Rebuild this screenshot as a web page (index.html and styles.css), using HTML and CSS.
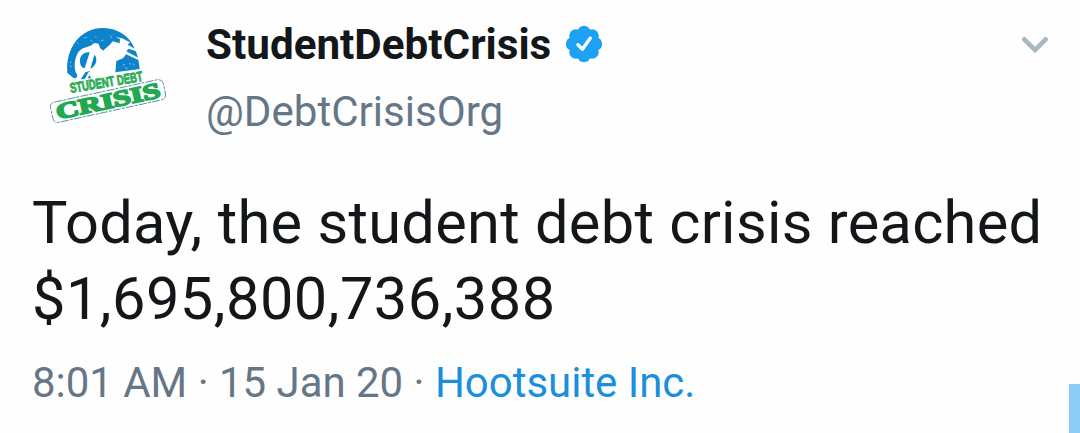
FILE: index.html
```html
<!DOCTYPE html>
<html lang="en">
<head>
<meta charset="utf-8">
<title>StudentDebtCrisis</title>
<link rel="stylesheet" href="styles.css">
</head>
<body>
<article class="tweet">
  <header class="header">
    <svg class="avatar" viewBox="0 0 420 360" role="img" aria-label="Student Debt Crisis">
      <path class="dome" d="M82 174C76 95 125 39 188 39C250 39 293 82 299 162L226 172L102 190Z"/>
      <path class="figure" d="M104 205L112 181C99 164 103 126 117 109C128 96 145 97 155 90L163 84L176 86L180 99L190 107C204 94 212 88 218 79L239 85L240 72L226 66L246 70L270 82L263 89L296 107L297 112L266 101L259 109L297 130L294 134L258 118L249 130L229 138L226 174L190 182L150 195Z"/>
      <path class="dome" d="M149 112C128 111 118 125 120 142C121 152 126 159 134 160ZM163 119C174 130 170 153 151 161ZM122 193L136 172L150 168L147 180L154 189Z"/>
      <path class="figure" d="M132 197L146 170L151 172L143 192Z"/>
      <path class="grain" d="M111 83l4 3M132 69l9-2M164 64l6 3M182 78l9-3M211 61l4 8M248 151l7-3M267 144l6 5M95 139l-5 5M91 151l3 6M279 145l4 7M151 77l7 2M254 157l9 4"/>
      <g transform="translate(204 257) rotate(-12.3)">
        <rect class="frame" x="-173" y="-30" width="346" height="62" rx="15"/>
        <text class="word-bottom" x="-159" y="23" textLength="318" lengthAdjust="spacingAndGlyphs">CRISIS</text>
      </g>
      <g transform="translate(92 234) rotate(-9.5)">
        <text class="word-top" textLength="221" lengthAdjust="spacingAndGlyphs">STUDENT DEBT</text>
      </g>
    </svg>
    <div class="identity">
      <div class="name-row">
        <span class="name">StudentDebtCrisis</span>
        <svg class="badge" viewBox="0 0 38 38" role="img" aria-label="Verified">
          <g class="badge-shape">
            <circle cx="19" cy="19" r="14"/>
            <circle cx="19" cy="7.5" r="6.7"/><circle cx="27.1" cy="10.9" r="6.7"/>
            <circle cx="30.5" cy="19" r="6.7"/><circle cx="27.1" cy="27.1" r="6.7"/>
            <circle cx="19" cy="30.5" r="6.7"/><circle cx="10.9" cy="27.1" r="6.7"/>
            <circle cx="7.5" cy="19" r="6.7"/><circle cx="10.9" cy="10.9" r="6.7"/>
          </g>
          <path class="badge-check" d="M13 19.8L17.4 24.3L25.2 13.2"/>
        </svg>
      </div>
      <div class="handle">@DebtCrisisOrg</div>
    </div>
    <svg class="chevron" viewBox="0 0 28 18" aria-hidden="true"><path d="M3.3 3.3L14 14L24.7 3.3"/></svg>
  </header>
  <p class="message">Today, the student debt crisis reached<br><span class="amount">$1,695,800,736,388</span></p>
  <footer class="meta">8:01 AM · 15 Jan 20 · <a class="source">Hootsuite Inc.</a></footer>
  <div class="side-tab"></div>
</article>
</body>
</html>
```

FILE: styles.css
```css
body {
  margin: 0;
  background: #fefefe;
  font-family: Roboto, "Liberation Sans", sans-serif;
}

.tweet {
  position: relative;
  box-sizing: border-box;
  height: 433px;
  padding: 15px 0 0 32px;
  overflow: hidden;
  color: #14171a;
}

.header {
  display: flex;
  align-items: flex-start;
  height: 170px;
}

.avatar {
  flex: none;
  width: 140px;
  height: 120px;
  margin-left: 8px;
}

.dome { fill: #0c83ca; }
.figure { fill: #fefefe; }
.grain { fill: none; stroke: #79bce4; stroke-width: 3; }

.word-top {
  fill: #29ad54;
  stroke: #29ad54;
  stroke-width: 2.5;
  font: bold 42px "Liberation Sans", sans-serif;
}

.word-bottom {
  fill: #20a951;
  stroke: #20a951;
  stroke-width: 5;
  font: bold 66px "Liberation Serif", serif;
}

.frame {
  fill: #fefefe;
  stroke: #4686a0;
  stroke-width: 2.5;
  stroke-dasharray: 24 3 9 4;
}

.identity {
  flex: 1;
  margin: 1px 0 0 26px;
}

.name-row {
  display: flex;
  align-items: center;
  height: 58px;
}

.name {
  font-size: 42.2px;
  font-weight: 700;
  line-height: 58px;
}

.badge {
  width: 38px;
  height: 38px;
  margin: -2px 0 0 14px;
}

.badge-shape { fill: #1da1f2; }

.badge-check {
  fill: none;
  stroke: #fff;
  stroke-width: 3.4;
  stroke-linecap: round;
  stroke-linejoin: round;
}

.handle {
  margin-top: 9px;
  color: #657786;
  font-size: 42.1px;
  line-height: 58px;
}

.chevron {
  width: 28px;
  height: 18px;
  margin: 21px 31px 0 0;
  fill: none;
  stroke: #aab8c2;
  stroke-width: 4.6;
  stroke-linecap: round;
}

.message {
  margin: 0;
  font-size: 59.5px;
  letter-spacing: 0.3px;
  line-height: 76px;
  white-space: nowrap;
}

.amount { letter-spacing: 0.48px; }

.meta {
  margin-top: 17px;
  color: #657786;
  font-size: 41.95px;
  line-height: 58px;
  white-space: nowrap;
}

.source { color: #1b8fdc; }

.side-tab {
  position: absolute;
  right: 0;
  bottom: 0;
  width: 11px;
  height: 49px;
  background: #8ccdf7;
}
```
